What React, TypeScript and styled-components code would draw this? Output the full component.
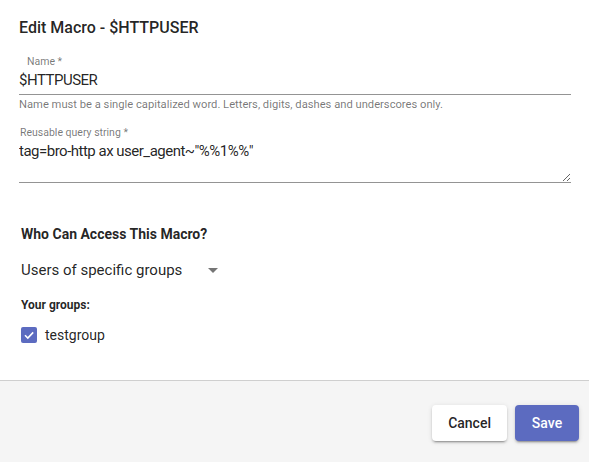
import styled, { createGlobalStyle } from "styled-components";

const GlobalStyle = createGlobalStyle`
  html, body {
    margin: 0;
    padding: 0;
    background: #fff;
    font-family: Roboto, "Liberation Sans", sans-serif;
    color: rgba(0, 0, 0, 0.87);
  }
  * { box-sizing: border-box; }
`;

export default function App() {
  return (
    <>
      <GlobalStyle />
      <Dialog>
        <Body>
          <Title>Edit Macro - $HTTPUSER</Title>
          <Field>
            <Label indent>Name *</Label>
            <Input defaultValue="$HTTPUSER" />
            <Helper>Name must be a single capitalized word. Letters, digits, dashes and underscores only.</Helper>
          </Field>
          <Field>
            <Label>Reusable query string *</Label>
            <TextArea defaultValue={'tag=bro-http ax user_agent~"%%1%%"'} rows={2} />
          </Field>
          <Section>
            <SectionTitle>Who Can Access This Macro?</SectionTitle>
            <Select>
              <span>Users of specific groups</span>
              <Caret />
            </Select>
            <SubTitle>Your groups:</SubTitle>
            <CheckRow>
              <CheckBox>
                <svg width="12" height="12" viewBox="0 0 12 12">
                  <path d="M2 6.2 L4.8 9 L10.2 3.4" fill="none" stroke="#fff" strokeWidth="1.6" />
                </svg>
              </CheckBox>
              <CheckLabel>testgroup</CheckLabel>
            </CheckRow>
          </Section>
        </Body>
        <Footer>
          <Button>Cancel</Button>
          <Button primary>Save</Button>
        </Footer>
      </Dialog>
    </>
  );
}

const Dialog = styled.div`
  width: 589px;
  height: 462px;
  display: flex;
  flex-direction: column;
  background: #fff;
`;

const Body = styled.div`
  flex: 1;
  padding: 17px 18px 0 19px;
  border-bottom: 1px solid #cfcfcf;
`;

const Title = styled.h2`
  margin: 0 0 16px 0;
  font-size: 16px;
  font-weight: 500;
  line-height: 22px;
`;

const Field = styled.div`
  display: flex;
  flex-direction: column;
  margin-bottom: 15px;
`;

const Label = styled.label<{ indent?: boolean }>`
  font-size: 10.5px;
  line-height: 13px;
  color: rgba(0, 0, 0, 0.54);
  padding-left: ${(p) => (p.indent ? "8px" : "1px")};
`;

const Input = styled.input`
  border: none;
  border-bottom: 1px solid #949494;
  outline: none;
  padding: 3px 0 4px 0;
  font-family: inherit;
  font-size: 15px;
  letter-spacing: -0.5px;
  line-height: 19px;
  color: rgba(0, 0, 0, 0.87);
  background: transparent;
`;

const TextArea = styled.textarea`
  border: none;
  border-bottom: 1px solid #949494;
  outline: none;
  padding: 3px 0 2px 0;
  font-family: inherit;
  font-size: 15px;
  letter-spacing: -0.5px;
  line-height: 19px;
  height: 44px;
  color: rgba(0, 0, 0, 0.87);
  background: transparent;
`;

const Helper = styled.div`
  margin-top: 3px;
  font-size: 11.2px;
  line-height: 13px;
  color: rgba(0, 0, 0, 0.54);
`;

const Section = styled.div`
  padding: 27px 0 0 2px;
`;

const SectionTitle = styled.h3`
  margin: 0;
  font-size: 14px;
  font-weight: 700;
  line-height: 18px;
`;

const Select = styled.div`
  display: flex;
  align-items: center;
  width: 200px;
  gap: 26px;
  margin-top: 17px;
  font-size: 15px;
  line-height: 20px;
  color: rgba(0, 0, 0, 0.87);
`;

const Caret = styled.span`
  width: 0;
  height: 0;
  border-left: 5px solid transparent;
  border-right: 5px solid transparent;
  border-top: 5px solid rgba(0, 0, 0, 0.54);
`;

const SubTitle = styled.div`
  margin-top: 17px;
  font-size: 12px;
  font-weight: 700;
  line-height: 16px;
`;

const CheckRow = styled.div`
  display: flex;
  align-items: center;
  gap: 8px;
  margin-top: 13px;
`;

const CheckBox = styled.span`
  width: 16px;
  height: 16px;
  border-radius: 2px;
  background: #5c6bc0;
  display: flex;
  align-items: center;
  justify-content: center;
`;

const CheckLabel = styled.span`
  font-size: 14px;
  line-height: 18px;
`;

const Footer = styled.div`
  height: 81px;
  background: #f5f5f5;
  display: flex;
  justify-content: flex-end;
  align-items: flex-start;
  gap: 8px;
  padding: 24px 10px 0 0;
`;

const Button = styled.button<{ primary?: boolean }>`
  height: 36px;
  padding: 0 16px;
  min-width: 64px;
  border: none;
  border-radius: 4px;
  font-family: inherit;
  font-size: 14px;
  font-weight: 500;
  background: ${(p) => (p.primary ? "#5c6bc0" : "#fff")};
  color: ${(p) => (p.primary ? "#fff" : "rgba(0, 0, 0, 0.87)")};
  box-shadow: 0 3px 1px -2px rgba(0, 0, 0, 0.2), 0 2px 2px 0 rgba(0, 0, 0, 0.14),
    0 1px 5px 0 rgba(0, 0, 0, 0.12);
`;
